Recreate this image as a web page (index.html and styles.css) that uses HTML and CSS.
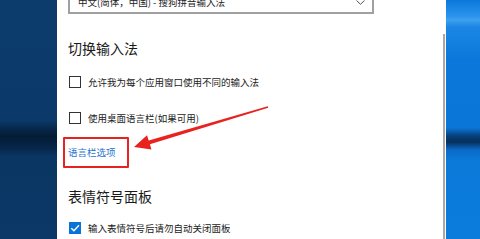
FILE: index.html
```html
<!DOCTYPE html>
<html lang="zh-CN">
<head>
<meta charset="utf-8">
<link rel="stylesheet" href="styles.css">
</head>
<body>
<div class="screen">
  <div class="desk-left"></div>
  <main class="panel">
    <div class="dropdown">
      <span class="dd-text">中文(简体，中国) - 搜狗拼音输入法</span>
      <svg class="chev" width="9" height="5" viewBox="0 0 9 5"><path d="M0.5 0.5 L4.5 4.3 L8.5 0.5" fill="none" stroke="#555" stroke-width="1"/></svg>
    </div>
    <h2 class="heading h1">切换输入法</h2>
    <label class="row r1"><span class="box"></span><span>允许我为每个应用窗口使用不同的输入法</span></label>
    <label class="row r2"><span class="box"></span><span>使用桌面语言栏(如果可用)</span></label>
    <div class="link-wrap">
      <a class="link">语言栏选项</a>
      <span class="highlight"></span>
    </div>
    <h2 class="heading h2">表情符号面板</h2>
    <label class="row r3"><span class="box checked"><svg width="12" height="12" viewBox="0 0 12 12"><path d="M2.3 6.2 L4.9 8.8 L10 3.2" fill="none" stroke="#fff" stroke-width="1.3"/></svg></span><span>输入表情符号后请勿自动关闭面板</span></label>
  </main>
  <div class="scroll"><div class="thumb"></div></div>
  <div class="desk-right"></div>
  <svg class="arrow" width="480" height="239" viewBox="0 0 480 239">
    <polygon points="134,147 151.5,149.5 149.9,144.3 268.2,107.7 267.8,106.3 148.7,140.5 147,135.2" fill="#e8231f"/>
  </svg>
</div>
</body>
</html>
```

FILE: styles.css
```css
html, body {
  margin: 0;
  padding: 0;
  background: #fff;
}
.screen {
  position: relative;
  width: 480px;
  height: 239px;
  overflow: hidden;
  display: grid;
  grid-template-columns: 57px 386px 3px 34px;
  font-family: "Noto Sans CJK SC", "Noto Sans", sans-serif;
  color: #1b1b1b;
}
.desk-left {
  background: linear-gradient(180deg, #0c3c6c 0px, #0b3a6a 120px, #07294d 128px, #041b34 136px, #06264a 148px, #0a3663 156px, #0b3867 239px);
}
.desk-right {
  background: linear-gradient(180deg, #0b79db 0px, #2a93ec 16px, #3fa0f0 20px, #1b86e4 27px, #0a78da 60px, #0a76d8 128px, #073f78 136px, #06305e 142px, #0a6bc8 150px, #0b7ad9 160px, #0b7bdc 239px);
}
.panel {
  background: #fff;
  padding-left: 11px;
  display: flex;
  flex-direction: column;
  align-items: flex-start;
}
.scroll {
  background: #fff;
  display: flex;
  flex-direction: column;
}
.thumb {
  margin-top: 34px;
  width: 2px;
  flex: 1;
  background: #a8a8a8;
}
.dropdown {
  margin-top: -20px;
  box-sizing: border-box;
  width: 306px;
  height: 34px;
  border: 2px solid #a0a0a0;
  display: flex;
  align-items: flex-end;
  justify-content: space-between;
  padding: 0 7px 3px 8px;
  font-size: 9.5px;
  line-height: 14px;
  color: #222;
}
.chev {
  margin-bottom: 4px;
}
.heading {
  margin: 0;
  font-size: 14px;
  line-height: 20px;
  font-weight: 400;
  color: #1a1a1a;
}
.h1 { margin-top: 24px; }
.h2 { margin-top: 27px; }
.row {
  display: flex;
  align-items: center;
  gap: 7px;
  height: 14px;
  font-size: 9.5px;
  line-height: 14px;
  padding-left: 1px;
}
.r1 { margin-top: 17px; }
.r2 { margin-top: 22px; }
.r3 { margin-top: 15px; }
.box {
  box-sizing: border-box;
  width: 12px;
  height: 12px;
  border: 1.5px solid #333;
  background: #fff;
  display: block;
}
.box.checked {
  border: none;
  background: #0a74d6;
}
.box.checked svg { display: block; }
.link-wrap {
  position: relative;
  margin-top: 20px;
}
.link {
  display: block;
  font-size: 9.5px;
  line-height: 14px;
  color: #1f74cf;
}
.highlight {
  position: absolute;
  left: -5px;
  top: -8px;
  width: 66px;
  height: 31px;
  box-sizing: border-box;
  border: 2px solid #e8231f;
  border-radius: 1px;
}
.arrow {
  position: absolute;
  left: 0;
  top: 0;
  pointer-events: none;
}
```
